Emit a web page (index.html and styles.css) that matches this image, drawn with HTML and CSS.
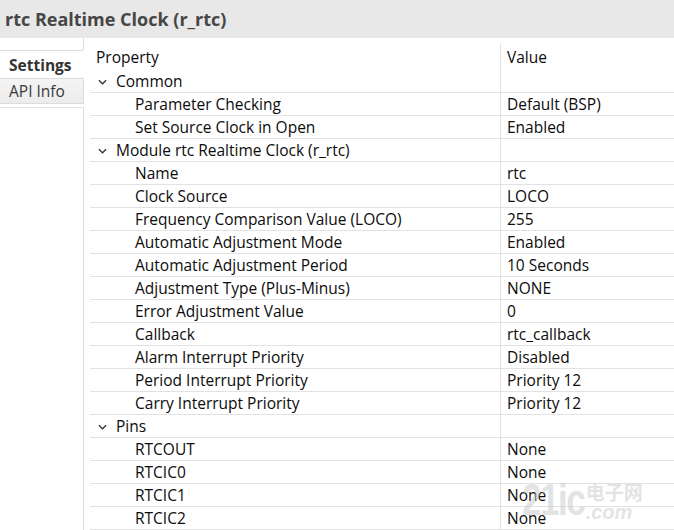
FILE: index.html
```html
<!DOCTYPE html>
<html>
<head>
<meta charset="utf-8">
<link rel="stylesheet" href="styles.css">
</head>
<body>
<div class="page">
  <div class="title">rtc Realtime Clock (r_rtc)</div>
  <div class="main">
    <div class="tabs">
      <div class="tab active">Settings</div>
      <div class="tab">API Info</div>
      <div class="tab-rest"></div>
    </div>
    <div class="grid">
      <div class="head"><div class="hc">Property</div><div class="hc vline">Value</div></div>

      <div class="row"><div class="pc l1"><svg class="chev" viewBox="0 0 10 6"><polyline points="1,1 5,5 9,1"/></svg>Common</div><div class="vc"></div></div>
      <div class="row"><div class="pc l2">Parameter Checking</div><div class="vc">Default (BSP)</div></div>
      <div class="row"><div class="pc l2">Set Source Clock in Open</div><div class="vc">Enabled</div></div>

      <div class="row"><div class="pc l1"><svg class="chev" viewBox="0 0 10 6"><polyline points="1,1 5,5 9,1"/></svg>Module rtc Realtime Clock (r_rtc)</div><div class="vc"></div></div>
      <div class="row"><div class="pc l2">Name</div><div class="vc">rtc</div></div>
      <div class="row"><div class="pc l2">Clock Source</div><div class="vc">LOCO</div></div>
      <div class="row"><div class="pc l2">Frequency Comparison Value (LOCO)</div><div class="vc">255</div></div>
      <div class="row"><div class="pc l2">Automatic Adjustment Mode</div><div class="vc">Enabled</div></div>
      <div class="row"><div class="pc l2">Automatic Adjustment Period</div><div class="vc">10 Seconds</div></div>
      <div class="row"><div class="pc l2">Adjustment Type (Plus-Minus)</div><div class="vc">NONE</div></div>
      <div class="row"><div class="pc l2">Error Adjustment Value</div><div class="vc">0</div></div>
      <div class="row"><div class="pc l2">Callback</div><div class="vc">rtc_callback</div></div>
      <div class="row"><div class="pc l2">Alarm Interrupt Priority</div><div class="vc">Disabled</div></div>
      <div class="row"><div class="pc l2">Period Interrupt Priority</div><div class="vc">Priority 12</div></div>
      <div class="row"><div class="pc l2">Carry Interrupt Priority</div><div class="vc">Priority 12</div></div>

      <div class="row"><div class="pc l1"><svg class="chev" viewBox="0 0 10 6"><polyline points="1,1 5,5 9,1"/></svg>Pins</div><div class="vc"></div></div>
      <div class="row"><div class="pc l2">RTCOUT</div><div class="vc">None</div></div>
      <div class="row"><div class="pc l2">RTCIC0</div><div class="vc">None</div></div>
      <div class="row"><div class="pc l2">RTCIC1</div><div class="vc">None</div></div>
      <div class="row"><div class="pc l2">RTCIC2</div><div class="vc">None</div></div>
    </div>
  </div>
  <div class="watermark"><span class="wm-big">21ic</span><span class="wm-side"><span class="wm-cn">电子网</span><span class="wm-com">.com</span></span></div>
</div>
</body>
</html>
```

FILE: styles.css
```css
html, body {
  margin: 0;
  padding: 0;
  background: #ffffff;
}
.page {
  position: relative;
  width: 674px;
  height: 530px;
  overflow: hidden;
  font-family: "Open Sans", "Noto Sans", "Noto Sans CJK SC", sans-serif;
  font-size: 15.5px;
  color: #0c0c0c;
}
.title {
  height: 38px;
  box-sizing: border-box;
  background: #e8e8e8;
  padding-left: 5px;
  line-height: 38px;
  font-size: 18px;
  font-weight: 700;
  color: #464646;
}
.main {
  display: flex;
  height: 492px;
}
.tabs {
  width: 84px;
  flex: none;
  display: flex;
  flex-direction: column;
  padding-top: 12px;
  box-sizing: border-box;
  position: relative;
}
.tabs::before {
  content: "";
  position: absolute;
  right: 0;
  top: 0;
  width: 1px;
  height: 12px;
  background: #dcdcdc;
}
.tab {
  height: 28px;
  line-height: 28px;
  padding-left: 9px;
  box-sizing: border-box;
  color: #3a3a3a;
  font-size: 15.5px;
  border-top: 1px solid #dcdcdc;
  border-right: 1px solid #dcdcdc;
  background: linear-gradient(#f4f4f4, #ececec);
}
.tab.active {
  background: #ffffff;
  font-weight: 700;
  border-right-color: #ffffff;
  color: #333;
}
.tab + .tab {
  height: 26px;
  line-height: 25px;
  border-bottom: 1px solid #dcdcdc;
}
.tab-rest {
  flex: 1;
  border-right: 1px solid #dcdcdc;
  border-top: 1px solid #e4e4e4;
  margin-top: 3px;
}
.grid {
  flex: 1;
  margin-left: 6px;
  padding-top: 5px;
  display: flex;
  flex-direction: column;
}
.head, .row {
  display: grid;
  grid-template-columns: 410px 1fr;
}
.head {
  height: 27px;
}
.hc {
  padding-top: 4px;
  padding-left: 6px;
  line-height: 21px;
}
.hc.vline {
  border-left: 1px solid #e2e2e2;
}
.row {
  height: 23px;
  box-sizing: border-box;
  border-bottom: 1px solid #e2e2e2;
  line-height: 23px;
  white-space: nowrap;
}
.pc {
  padding-left: 6px;
  display: flex;
  align-items: center;
}
.vc {
  border-left: 1px solid #e2e2e2;
  padding-left: 6px;
}
.pc.l1 {
  padding-left: 8px;
}
.pc.l2 {
  padding-left: 45px;
}
.chev {
  width: 9px;
  height: 6px;
  margin-right: 9px;
  fill: none;
  stroke: #333;
  stroke-width: 1.4;
}
.watermark {
  position: absolute;
  left: 522px;
  top: 478px;
  display: flex;
  align-items: flex-end;
  color: rgba(200, 200, 200, 0.5);
  pointer-events: none;
}
.wm-big {
  font-family: "Liberation Sans", sans-serif;
  font-size: 44px;
  font-weight: 700;
  line-height: 44px;
  letter-spacing: -2px;
  transform: scaleX(0.8);
  transform-origin: left bottom;
  margin-right: -14px;
}
.wm-side {
  display: flex;
  flex-direction: column;
  line-height: 20px;
}
.wm-cn {
  font-family: "Noto Sans CJK SC", sans-serif;
  font-size: 19px;
  font-weight: 700;
}
.wm-com {
  font-family: "Liberation Sans", sans-serif;
  font-size: 20px;
  font-weight: 700;
  font-style: italic;
}
```
